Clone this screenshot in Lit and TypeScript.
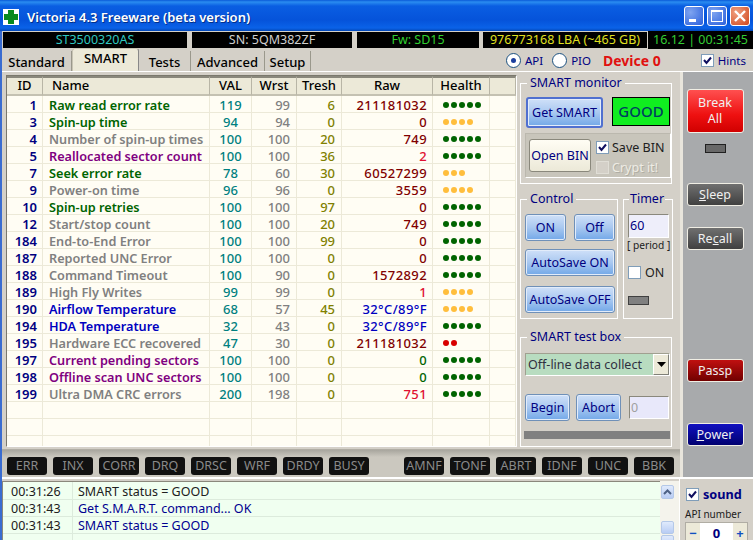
import { LitElement, html, css } from 'lit';
import { customElement } from 'lit/decorators.js';

const GREEN = 'g';
const GREY = 'k';
const PURPLE = 'p';
const BLUE = 'b';

// id, name, colour, val, wrst, tresh, raw, raw colour, dots, dot colour
const rows: [string, string, string, string, string, string, string, string, number, string][] = [
  ['1', 'Raw read error rate', GREEN, '119', '99', '6', '211181032', 'm', 5, 'dg'],
  ['3', 'Spin-up time', GREEN, '94', '94', '0', '0', 'm', 4, 'dy'],
  ['4', 'Number of spin-up times', GREY, '100', '100', '20', '749', 'm', 5, 'dg'],
  ['5', 'Reallocated sector count', PURPLE, '100', '100', '36', '2', 'r', 5, 'dg'],
  ['7', 'Seek error rate', GREEN, '78', '60', '30', '60527299', 'm', 3, 'dy'],
  ['9', 'Power-on time', GREY, '96', '96', '0', '3559', 'm', 4, 'dy'],
  ['10', 'Spin-up retries', GREEN, '100', '100', '97', '0', 'm', 5, 'dg'],
  ['12', 'Start/stop count', GREY, '100', '100', '20', '749', 'm', 5, 'dg'],
  ['184', 'End-to-End Error', GREY, '100', '100', '99', '0', 'm', 5, 'dg'],
  ['187', 'Reported UNC Error', GREY, '100', '100', '0', '0', 'm', 5, 'dg'],
  ['188', 'Command Timeout', GREY, '100', '90', '0', '1572892', 'm', 5, 'dg'],
  ['189', 'High Fly Writes', GREY, '99', '99', '0', '1', 'r', 4, 'dy'],
  ['190', 'Airflow Temperature', BLUE, '68', '57', '45', '32°C/89°F', 'n', 4, 'dy'],
  ['194', 'HDA Temperature', BLUE, '32', '43', '0', '32°C/89°F', 'n', 5, 'dg'],
  ['195', 'Hardware ECC recovered', GREY, '47', '30', '0', '211181032', 'm', 2, 'dr'],
  ['197', 'Current pending sectors', PURPLE, '100', '100', '0', '0', 'dgt', 5, 'dg'],
  ['198', 'Offline scan UNC sectors', PURPLE, '100', '100', '0', '0', 'dgt', 5, 'dg'],
  ['199', 'Ultra DMA CRC errors', GREY, '200', '198', '0', '751', 'r', 5, 'dg'],
];

const leftLeds = ['ERR', 'INX', 'CORR', 'DRQ', 'DRSC', 'WRF', 'DRDY', 'BUSY'];
const rightLeds = ['AMNF', 'TONF', 'ABRT', 'IDNF', 'UNC', 'BBK'];

@customElement('app-root')
export class AppRoot extends LitElement {
  static styles = css`
    :host {
      display: block;
      position: relative;
      width: 753px;
      height: 540px;
      overflow: hidden;
      background: #d4d0c8;
      font-family: 'Noto Sans', 'DejaVu Sans', sans-serif;
      font-size: 12.5px;
      color: #000080;
    }
    /* blue window frame down the left edge */
    :host::after {
      content: '';
      position: absolute;
      left: 0;
      top: 31px;
      bottom: 0;
      width: 2px;
      background: #3a6cd0;
    }
    .title {
      height: 31px;
      display: flex;
      align-items: center;
      padding: 2px 3px 0 3px;
      background: linear-gradient(#0a5ad8 0, #2a8cf0 2px, #0a5ee2 6px, #0553da 20px, #0a62e8 28px, #0348b8 31px);
      color: #fff;
      font-weight: 600;
      font-size: 13px;
      box-sizing: border-box;
    }
    .title .cross { margin: 0 8px 0 0; }
    .title .name { flex: 1; text-shadow: 1px 1px 0 #02308a; }
    .wbtns { display: flex; gap: 3px; margin-top: -2px; }
    .wbtn {
      width: 20px;
      height: 20px;
      border: 1px solid #fff;
      border-radius: 3px;
      box-sizing: border-box;
      background: radial-gradient(circle at 30% 30%, #7fa4f0, #2a5fdc);
    }
    .wbtn svg { display: block; }
    .wbtn.close { background: radial-gradient(circle at 30% 30%, #f0a080, #d0461c); }
    .info {
      height: 18px;
      display: flex;
      align-items: stretch;
      padding-left: 2px;
      background: #d4d0c8;
    }
    .cell {
      background: #000;
      outline: 1px solid #d4d0c8;
      outline-offset: -1px;
      box-sizing: border-box;
      line-height: 16px;
      padding-top: 1px;
      text-align: center;
      margin-right: 3px;
    }
    .clock {
      flex: 1;
      background: #000;
      color: #33cc33;
      line-height: 18px;
      text-align: center;
      white-space: nowrap;
    }
    .toprow {
      height: 23px;
      display: flex;
      background: #d4d0c8;
      align-items: flex-end;
      padding-left: 2px;
      box-sizing: border-box;
      border-bottom: 1px solid #fff;
    }
    .tabs { display: flex; align-items: flex-end; color: #000; font-weight: 500; font-size: 13px; }
    .tab {
      height: 20px;
      line-height: 22px;
      box-sizing: border-box;
      border-right: 1px solid #9a988c;
      text-align: center;
    }
    .tab.on {
      height: 23px;
      line-height: 19px;
      border: 1px solid #c8c4b4;
      border-bottom: none;
      border-right: 1px solid #888;
      border-radius: 3px 3px 0 0;
      background: #ece9d8;
    }
    .opts {
      margin-left: auto;
      display: flex;
      align-items: center;
      height: 22px;
      color: #000080;
      padding-right: 7px;
      font-size: 11.5px;
    }
    .radio {
      width: 13px;
      height: 13px;
      border: 1px solid #1c5180;
      border-radius: 50%;
      background: #fff;
      display: inline-flex;
      align-items: center;
      justify-content: center;
      margin-right: 4px;
    }
    .radio i { width: 5px; height: 5px; background: #1c3f9e; border-radius: 50%; }
    .radio.second { margin-left: 9px; }
    .device { color: #e01010; font-weight: 700; font-size: 14px; margin: 0 40px 0 12px; }
    .check {
      width: 13px;
      height: 13px;
      background: #fff;
      border: 1px solid #7f9db9;
      display: inline-block;
      box-sizing: border-box;
      flex: none;
      position: relative;
    }
    .check svg { position: absolute; left: 1px; top: 1px; }
    .body { height: 405px; display: flex; }
    .left { width: 680px; flex: none; display: flex; flex-direction: column; background: #d4d0c8; }
    .content { height: 376px; display: flex; padding-left: 6px; }
    .tablebox {
      width: 511px;
      height: 372px;
      margin-top: 3px;
      box-sizing: border-box;
      border: 1px solid #7a786c;
      border-right-color: #fff;
      border-bottom-color: #fff;
      background: #fffdf4;
      overflow: hidden;
      flex: none;
    }
    .grid {
      display: grid;
      grid-template-columns: 36px 167px 42px 45px 45px 91px 57px 1fr;
    }
    .h {
      height: 20px;
      line-height: 14px;
      background: #ece9d8;
      border-right: 1px solid #b8b5a6;
      border-bottom: 2px solid #c4c1b2;
      border-top: 2px solid #8a887c;
      box-sizing: border-box;
      color: #000;
      font-weight: 500;
      text-align: center;
      font-size: 13px;
    }
    .h.nm { text-align: left; padding-left: 9px; }
    .c {
      height: 17px;
      line-height: 16px;
      padding-top: 1px;
      border-right: 1px solid #ece9d8;
      border-bottom: 1px solid #ece9d8;
      box-sizing: border-box;
      font-weight: 500;
      font-size: 13px;
      white-space: nowrap;
      text-align: right;
      padding-right: 5px;
    }
    .c.id { color: #000080; font-weight: 600; padding-right: 5px; }
    .c.nm { text-align: left; padding-left: 6px; font-weight: 600; font-size: 12.7px; }
    .c.val { text-align: center; padding-left: 0; padding-right: 0; color: #008080; }
    .c.w { color: #808080; padding-right: 6px; }
    .c.t { color: #808000; padding-right: 6px; }
    .c.raw { padding-right: 5px; letter-spacing: 0.4px; }
    .c.hl { text-align: left; padding: 1px 0 0 10px; display: flex; gap: 2px; align-items: center; }
    .g { color: #006400; }
    .k { color: #808080; }
    .p { color: #800080; }
    .b { color: #0000c0; }
    .m { color: #800000; }
    .r { color: #e01030; }
    .n { color: #0000c0; }
    .dgt { color: #006400; }
    .dot { width: 6px; height: 6px; border-radius: 50%; flex: none; }
    .dg { background: #006400; }
    .dy { background: #ffbe3c; }
    .dr { background: #d80000; }
    .panels { flex: 1; display: flex; flex-direction: column; padding: 4px 0 0 3px; min-width: 0; }
    fieldset {
      border: 1px solid #fff;
      margin: 0;
      padding: 0;
      box-sizing: border-box;
      min-width: 0;
    }
    legend { margin-left: 2px; padding: 0 3px; line-height: 14px; color: #000080; white-space: nowrap; }
    .mon { width: 152px; height: 108px; padding: 7px 0 0 5px; }
    .mon legend { margin-left: 1px; }
    .mon .top { display: flex; align-items: flex-start; gap: 9px; }
    .btn {
      background: linear-gradient(#cfe0f8, #a9c8f0 50%, #72a8e8);
      border: 1px solid #6f90b8;
      border-radius: 3px;
      box-sizing: border-box;
      color: #000080;
      text-align: center;
      white-space: nowrap;
      box-shadow: inset 0 0 0 1px #e2ecfa;
    }
    .getsmart { width: 77px; height: 31px; line-height: 27px; border: 2px solid #5070d0; }
    .good {
      width: 58px;
      height: 29px;
      background: #10ee20;
      border: 1px solid #000;
      box-sizing: border-box;
      color: #004060;
      font-size: 15px;
      line-height: 27px;
      text-align: center;
      font-weight: 500;
    }
    .binbox {
      margin: 5px 0 0 -1px;
      width: 146px;
      height: 45px;
      background: #c8c5bb;
      border: 1px solid #fff;
      border-top-color: #bbb8ae;
      border-left-color: #bbb8ae;
      box-sizing: border-box;
      display: flex;
      align-items: center;
      padding-left: 3px;
      gap: 5px;
    }
    .openbin {
      width: 62px;
      height: 33px;
      line-height: 31px;
      background: linear-gradient(#fffdf4, #ece9d8);
      border: 1px solid #8a887c;
      border-radius: 3px;
      box-sizing: border-box;
      text-align: center;
      flex: none;
      white-space: nowrap;
    }
    .bincol { display: flex; flex-direction: column; gap: 4px; margin-top: 3px; color: #202020; white-space: nowrap; }
    .bincol div { display: flex; align-items: center; gap: 3px; height: 16px; }
    .dis { color: #eeece4; text-shadow: 1px 1px 0 #b0aea4; }
    .check.off { background: #d4d0c8; border-color: #e0ded6; }
    .ctl { display: flex; gap: 5px; margin-top: 8px; height: 127px; }
    .control { width: 98px; padding: 8px 0 0 4px; }
    .timer { width: 50px; padding: 8px 0 0 4px; }
    .timer legend { margin-left: 1px; padding: 0 1px; }
    .control .two { display: flex; gap: 8px; }
    .bs { width: 41px; height: 27px; line-height: 25px; }
    .bw { width: 90px; height: 27px; line-height: 25px; margin-top: 8px; }
    .bw2 { margin-top: 10px; }
    .edit {
      background: #eeeefa;
      border: 1px solid #8a887c;
      border-right-color: #fff;
      border-bottom-color: #fff;
      box-sizing: border-box;
      color: #000080;
    }
    .timer .edit { width: 41px; height: 24px; line-height: 22px; padding-left: 1px; }
    .period { font-size: 10.2px; color: #202020; line-height: 15px; white-space: nowrap; margin-left: -1px; }
    .timer .on { display: flex; align-items: center; gap: 4px; margin-top: 11px; color: #202020; height: 16px; }
    .ledbar { width: 21px; height: 9px; background: #808080; border: 1px solid #404040; box-sizing: border-box; margin-top: 16px; }
    .testbox { width: 152px; height: 117px; margin-top: 11px; padding: 9px 0 0 4px; }
    .combo {
      width: 145px;
      height: 23px;
      background: #b8dcc0;
      border: 1px solid #a0a090;
      border-right-color: #fff;
      border-bottom-color: #fff;
      box-sizing: border-box;
      display: flex;
      line-height: 21px;
      color: #303040;
      padding-left: 2px;
      white-space: nowrap;
    }
    .combo span { flex: 1; overflow: hidden; }
    .combo b {
      width: 16px;
      background: #ece9d8;
      border: 1px solid #fff;
      border-right-color: #808078;
      border-bottom-color: #808078;
      box-sizing: border-box;
      display: flex;
      align-items: center;
      justify-content: center;
    }
    .tbtns { display: flex; gap: 6px; margin-top: 18px; align-items: center; }
    .begin { width: 45px; height: 27px; line-height: 25px; }
    .abort { width: 45px; height: 27px; line-height: 25px; }
    .tbtns .edit { width: 40px; height: 23px; line-height: 21px; color: #a0a0a0; padding-left: 1px; margin-left: 2px; background: #e8e8fa; }
    .prog { width: 146px; height: 8px; background: #808080; margin: 10px 0 0 -1px; }
    .ledrow {
      flex: 1;
      background: linear-gradient(#a8a69e, #cbc8bf 7px);
      margin-top: 1px;
      border-top: 1px solid #b0ada4;
      display: flex;
      align-items: flex-start;
      padding: 7px 0 0 7px;
      gap: 6px;
    }
    .led {
      width: 40px;
      height: 18px;
      background: #111;
      border-radius: 3px;
      color: #8a8a8a;
      text-align: center;
      line-height: 18px;
      font-size: 12.5px;
      flex: none;
    }
    .spacer { width: 29px; flex: none; margin-right: -6px; }
    .side {
      flex: 1;
      background: #a8aaac;
      border-left: 3px solid #e8e5dc;
      display: flex;
      flex-direction: column;
      align-items: center;
      box-sizing: border-box;
      padding-right: 6px;
    }
    .sb {
      width: 57px;
      border: 1px solid #f0eee4;
      border-radius: 3px;
      box-sizing: border-box;
      color: #f0f0f0;
      text-align: center;
      flex: none;
    }
    .break {
      margin-top: 17px;
      height: 44px;
      line-height: 16px;
      padding-top: 5px;
      background: linear-gradient(#ff5050, #ee1010 60%, #d00000);
    }
    .sled { width: 21px; height: 9px; background: #686868; border: 1px solid #202020; box-sizing: border-box; margin-top: 11px; }
    .sleep { margin-top: 30px; height: 23px; line-height: 21px; background: linear-gradient(#707070, #404040); }
    .recall { margin-top: 21px; height: 23px; line-height: 21px; background: linear-gradient(#707070, #404040); }
    .passp { margin-top: 109px; height: 23px; line-height: 21px; background: linear-gradient(#c01010, #700000); }
    .power { margin-top: 41px; height: 23px; line-height: 21px; background: linear-gradient(#1010c0, #000070); }
    .bottom { height: 63px; display: flex; border-top: 2px solid #fff; box-sizing: border-box; }
    .log {
      width: 660px;
      margin-top: 2px;
      background: #f0fff0;
      border-left: 3px solid #8a887c;
      border-top: 1px solid #8a887c;
      box-sizing: border-box;
      flex: none;
      color: #202020;
    }
    .lr {
      height: 17px;
      line-height: 18px;
      display: flex;
      border-bottom: 1px solid #dcebdc;
      box-sizing: border-box;
      white-space: nowrap;
    }
    .lr.first { height: 18px; line-height: 19px; }
    .lr span:first-child { width: 70px; padding-left: 8px; border-right: 1px solid #dcebdc; box-sizing: border-box; }
    .lr span:last-child { padding-left: 5px; }
    .lr.bl span:last-child { color: #000090; }
    .scroll { width: 19px; flex: none; background: #f4f3ec; margin-top: 2px; display: flex; flex-direction: column; padding: 4px 5px 0 1px; box-sizing: border-box; }
    .sbtn { height: 14px; border: 1px solid #b4c8e8; border-radius: 2px; background: linear-gradient(#e0eafc, #b8ccf4); box-sizing: border-box; flex: none; display: flex; align-items: center; justify-content: center; }
    .thumb { margin-top: 22px; height: 13px; }
    .next { margin-top: 1px; }
    .foot { flex: 1; padding: 6px 0 0 6px; box-sizing: border-box; background: #d4d0c8; border-left: 1px solid #fff; }
    .sound { display: flex; align-items: center; gap: 4px; font-weight: 700; font-size: 12.7px; color: #000080; }
    .api { font-size: 10px; color: #202020; line-height: 14px; margin: 4px 0 0 -1px; white-space: nowrap; }
    .spin {
      display: flex;
      width: 63px;
      height: 22px;
      background: #fff;
      border: 1px solid #b0ada4;
      box-sizing: border-box;
      margin: 1px 0 0 -1px;
      font-weight: 700;
      font-size: 13px;
      color: #000080;
      line-height: 20px;
      text-align: center;
    }
    .spin i { width: 14px; font-style: normal; background: #ece9d8; color: #1050c0; }
    .spin span { flex: 1; }
  `;

  private checkMark() {
    return html`<svg width="9" height="9" viewBox="0 0 9 9"><path d="M1 4l2.5 3L8 1.5" fill="none" stroke="#101060" stroke-width="2"/></svg>`;
  }

  render() {
    return html`
      <div class="title">
        <svg class="cross" width="16" height="16" viewBox="0 0 16 16">
          <rect width="16" height="16" fill="#fff"/>
          <path d="M5 1h6v4h4v6h-4v4H5v-4H1V5h4z" fill="#0a8a20"/>
        </svg>
        <span class="name">Victoria 4.3 Freeware (beta version)</span>
        <div class="wbtns">
          <div class="wbtn"><svg width="18" height="18"><rect x="4" y="12" width="7" height="3" fill="#fff"/></svg></div>
          <div class="wbtn"><svg width="18" height="18"><rect x="3.5" y="3.5" width="11" height="11" fill="none" stroke="#fff"/><rect x="3" y="3" width="12" height="2" fill="#fff"/></svg></div>
          <div class="wbtn close"><svg width="18" height="18"><path d="M4 4l10 10M14 4L4 14" stroke="#fff" stroke-width="2.4"/></svg></div>
        </div>
      </div>
      <div class="info">
        <div class="cell" style="width:186px;color:#30c8c0;">ST3500320AS</div>
        <div class="cell" style="width:162px;color:#d0d0d0;">SN: 5QM382ZF</div>
        <div class="cell" style="width:124px;color:#30d030;margin-right:2px;">Fw: SD15</div>
        <div class="cell" style="width:166px;color:#e0e020;margin-right:0;">976773168 LBA (~465 GB)</div>
        <div class="clock">16.12 | 00:31:45</div>
      </div>
      <div class="toprow">
        <div class="tabs">
          <div class="tab" style="width:70px">Standard</div>
          <div class="tab on" style="width:67px">SMART</div>
          <div class="tab" style="width:52px">Tests</div>
          <div class="tab" style="width:74px">Advanced</div>
          <div class="tab" style="width:46px">Setup</div>
        </div>
        <div class="opts">
          <span class="radio"><i></i></span>API
          <span class="radio second"></span>PIO
          <span class="device">Device 0</span>
          <span class="check" style="margin-right:4px">${this.checkMark()}</span>Hints
        </div>
      </div>
      <div class="body">
        <div class="left">
          <div class="content">
            <div class="tablebox">
              <div class="grid">
                <div class="h">ID</div><div class="h nm">Name</div><div class="h">VAL</div><div class="h">Wrst</div>
                <div class="h">Tresh</div><div class="h">Raw</div><div class="h">Health</div><div class="h"></div>
                ${rows.map(
                  r => html`
                    <div class="c id">${r[0]}</div>
                    <div class="c nm ${r[2]}">${r[1]}</div>
                    <div class="c val">${r[3]}</div>
                    <div class="c w">${r[4]}</div>
                    <div class="c t">${r[5]}</div>
                    <div class="c raw ${r[7]}">${r[6]}</div>
                    <div class="c hl">${Array.from({ length: r[8] }, () => html`<span class="dot ${r[9]}"></span>`)}</div>
                    <div class="c"></div>
                  `
                )}
                ${[0, 1, 2].map(
                  () => html`<div class="c"></div><div class="c"></div><div class="c"></div><div class="c"></div><div class="c"></div><div class="c"></div><div class="c"></div><div class="c"></div>`
                )}
              </div>
            </div>
            <div class="panels">
              <fieldset class="mon">
                <legend>SMART monitor</legend>
                <div class="top">
                  <div class="btn getsmart">Get SMART</div>
                  <div class="good">GOOD</div>
                </div>
                <div class="binbox">
                  <div class="openbin">Open BIN</div>
                  <div class="bincol">
                    <div><span class="check">${this.checkMark()}</span>Save BIN</div>
                    <div class="dis"><span class="check off"></span>Crypt it!</div>
                  </div>
                </div>
              </fieldset>
              <div class="ctl">
                <fieldset class="control">
                  <legend>Control</legend>
                  <div class="two"><div class="btn bs">ON</div><div class="btn bs">Off</div></div>
                  <div class="btn bw">AutoSave ON</div>
                  <div class="btn bw bw2">AutoSave OFF</div>
                </fieldset>
                <fieldset class="timer">
                  <legend>Timer</legend>
                  <div class="edit">60</div>
                  <div class="period">[ period ]</div>
                  <div class="on"><span class="check"></span>ON</div>
                  <div class="ledbar"></div>
                </fieldset>
              </div>
              <fieldset class="testbox">
                <legend>SMART test box</legend>
                <div class="combo">
                  <span>Off-line data collect</span>
                  <b><svg width="9" height="5"><path d="M0 0h9L4.5 5z" fill="#000"/></svg></b>
                </div>
                <div class="tbtns">
                  <div class="btn begin">Begin</div>
                  <div class="btn abort">Abort</div>
                  <div class="edit">0</div>
                </div>
                <div class="prog"></div>
              </fieldset>
            </div>
          </div>
          <div class="ledrow">
            ${leftLeds.map(t => html`<div class="led">${t}</div>`)}
            <div class="spacer"></div>
            ${rightLeds.map(t => html`<div class="led">${t}</div>`)}
          </div>
        </div>
        <div class="side">
          <div class="sb break">Break<br />All</div>
          <div class="sled"></div>
          <div class="sb sleep"><u>S</u>leep</div>
          <div class="sb recall">Re<u>c</u>all</div>
          <div class="sb passp">Passp</div>
          <div class="sb power"><u>P</u>ower</div>
        </div>
      </div>
      <div class="bottom">
        <div class="log">
          <div class="lr first"><span>00:31:26</span><span>SMART status = GOOD</span></div>
          <div class="lr bl"><span>00:31:43</span><span>Get S.M.A.R.T. command... OK</span></div>
          <div class="lr bl"><span>00:31:43</span><span>SMART status = GOOD</span></div>
          <div class="lr"><span></span><span></span></div>
        </div>
        <div class="scroll">
          <div class="sbtn"><svg width="9" height="6"><path d="M1 5l3.5-3.5L8 5" fill="none" stroke="#4d6185" stroke-width="2"/></svg></div>
          <div class="sbtn thumb"></div>
          <div class="sbtn next"></div>
        </div>
        <div class="foot">
          <div class="sound"><span class="check">${this.checkMark()}</span>sound</div>
          <div class="api">API number</div>
          <div class="spin"><i>−</i><span>0</span><i>+</i></div>
        </div>
      </div>
    `;
  }
}
